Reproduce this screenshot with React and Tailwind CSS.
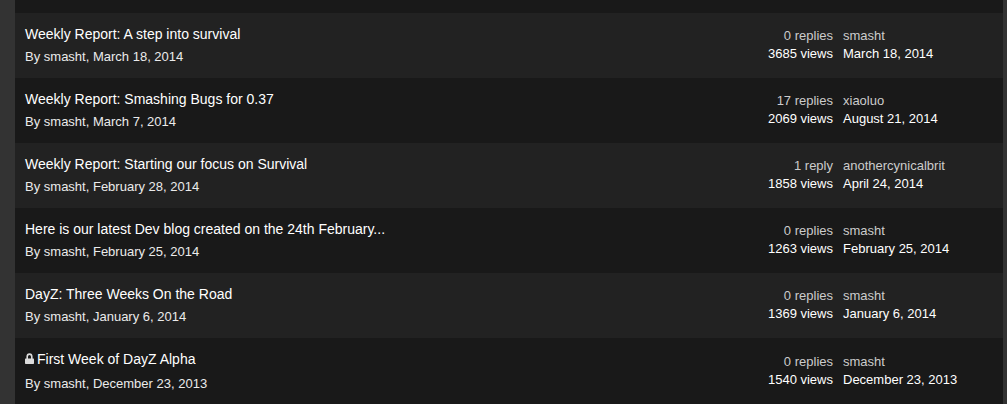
const topics = [
  { title: "Weekly Report: A step into survival", by: "smasht", started: "March 18, 2014", replies: "0 replies", views: "3685 views", last: "smasht", lastDate: "March 18, 2014" },
  { title: "Weekly Report: Smashing Bugs for 0.37", by: "smasht", started: "March 7, 2014", replies: "17 replies", views: "2069 views", last: "xiaoluo", lastDate: "August 21, 2014" },
  { title: "Weekly Report: Starting our focus on Survival", by: "smasht", started: "February 28, 2014", replies: "1 reply", views: "1858 views", last: "anothercynicalbrit", lastDate: "April 24, 2014" },
  { title: "Here is our latest Dev blog created on the 24th February...", by: "smasht", started: "February 25, 2014", replies: "0 replies", views: "1263 views", last: "smasht", lastDate: "February 25, 2014" },
  { title: "DayZ: Three Weeks On the Road", by: "smasht", started: "January 6, 2014", replies: "0 replies", views: "1369 views", last: "smasht", lastDate: "January 6, 2014" },
  { title: "First Week of DayZ Alpha", by: "smasht", started: "December 23, 2013", replies: "0 replies", views: "1540 views", last: "smasht", lastDate: "December 23, 2013", locked: true },
];

function LockIcon() {
  return (
    <svg viewBox="0 0 9 12" className="h-3 w-[9px] shrink-0" role="img" aria-label="Locked">
      <path d="M0.7 5.5H8.3Q9 5.5 9 6.2V10.3Q9 11 8.3 11H0.7Q0 11 0 10.3V6.2Q0 5.5 0.7 5.5Z" fill="#dcdcdc" />
      <path d="M2.2 6V3.7A2.3 2.6 0 0 1 6.8 3.7V6" fill="none" stroke="#dcdcdc" strokeWidth="1.6" />
    </svg>
  );
}

function TopicRow({ topic }) {
  return (
    <li className="flex items-center px-[10px] odd:bg-[#222222] even:bg-[#191919]">
      <div className="min-w-0 flex-1 pt-[10px] pb-[9px]">
        <h4 className={topic.locked ? "flex h-6 items-start text-sm leading-[22px]" : "text-sm leading-[22px]"}>
          {topic.locked && (
            <span className="mr-[3px] flex h-[22px] items-center">
              <LockIcon />
            </span>
          )}
          <a href="#topic" className="text-white">{topic.title}</a>
        </h4>
        <p className="text-[13px] leading-6 text-[#ebebeb]">
          By <a href="#member">{topic.by}</a>, {topic.started}
        </p>
      </div>
      <ul className="w-[100px] shrink-0 pb-[1px] text-right text-[13px] leading-[18px]">
        <li className="text-[#cccccc]">{topic.replies}</li>
        <li className="text-white">{topic.views}</li>
      </ul>
      <ul className="ml-[10px] w-[150px] shrink-0 pb-[1px] text-[13px] leading-[18px]">
        <li className="text-[#cccccc]"><a href="#member">{topic.last}</a></li>
        <li className="text-white"><a href="#last-post">{topic.lastDate}</a></li>
      </ul>
    </li>
  );
}

export default function App() {
  return (
    <main className="min-h-screen bg-[#333333] pr-1 pl-[15px] font-['Liberation_Sans',Arial,sans-serif]">
      <div className="min-h-screen bg-[#191919] pt-[13px]">
        <ol>
          {topics.map((topic) => (
            <TopicRow key={topic.title} topic={topic} />
          ))}
        </ol>
      </div>
    </main>
  );
}
